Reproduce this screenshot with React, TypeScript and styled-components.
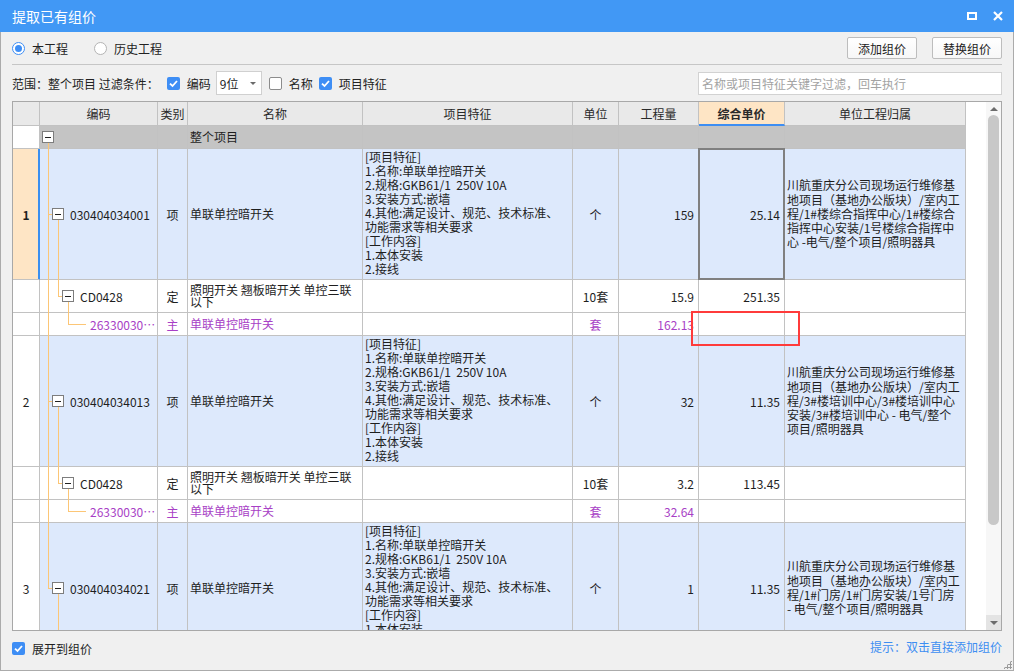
import React from 'react';
import styled, { createGlobalStyle, css } from 'styled-components';

const GlobalStyle = createGlobalStyle`
  html, body { margin: 0; padding: 0; background: #ffffff; }
  body {
    font-family: "Noto Sans CJK SC", "Microsoft YaHei", sans-serif;
    font-size: 12px;
    color: #1e1e1e;
  }
  * { box-sizing: border-box; }
`;

const BLUE = '#4198f5';
const LINE = '#c2c2c2';
const TREE = '#fcc676';
const PURPLE = '#a83fc6';
const ROW_BLUE = '#dde9fc';
const PEACH = '#fee5c5';
const COLS = '27px 118px 30px 175px 210px 46px 80px 86px 181px';

const Window = styled.div`
  position: relative;
  width: 1014px;
  height: 671px;
  display: flex;
  flex-direction: column;
  background: #f0f0f0;
`;

const TitleBar = styled.div`
  height: 32px;
  flex-shrink: 0;
  background: ${BLUE};
  color: #fff;
  display: flex;
  align-items: center;
  padding: 0 11px 0 12px;
  font-size: 14px;
`;

const Title = styled.span`
  flex: 1;
`;

const TitleButtons = styled.div`
  display: flex;
  align-items: center;
  gap: 16px;
`;

const MaxIcon = styled.span`
  width: 10px;
  height: 8px;
  border: 2px solid #fff;
`;

const Body = styled.div`
  flex: 1;
  display: flex;
  flex-direction: column;
  padding: 0 11px;
  border: 1px solid #ababab;
  border-top: none;
`;

const TopRow = styled.div`
  height: 33px;
  flex-shrink: 0;
  display: flex;
  align-items: center;
  border-bottom: 1px solid #c6c6c6;
`;

const RadioGroup = styled.div`
  display: flex;
  align-items: center;
  flex: 1;
`;

const RadioLabel = styled.label`
  display: flex;
  align-items: center;
  gap: 7px;
  margin-right: 26px;
  font-size: 12px;
  color: #222;
`;

const RadioDot = styled.span<{ $on?: boolean }>`
  width: 13px;
  height: 13px;
  border-radius: 50%;
  background: #fff;
  border: 1px solid ${p => (p.$on ? '#3e8ef5' : '#b4b4b4')};
  display: flex;
  align-items: center;
  justify-content: center;
  &::after {
    content: '';
    width: 7px;
    height: 7px;
    border-radius: 50%;
    background: ${p => (p.$on ? '#3e8ef5' : 'transparent')};
  }
`;

const Buttons = styled.div`
  display: flex;
  gap: 15px;
`;

const Button = styled.button`
  width: 70px;
  height: 22px;
  padding: 0;
  border: 1px solid #bdbdbd;
  border-radius: 2px;
  background: linear-gradient(#ffffff, #f7f7f7);
  font-family: inherit;
  font-size: 12px;
  color: #222;
`;

const FilterRow = styled.div`
  height: 36px;
  flex-shrink: 0;
  display: flex;
  align-items: center;
  font-size: 12px;
  color: #222;
`;

const FilterItem = styled.label<{ $gap?: number }>`
  display: flex;
  align-items: center;
  gap: 7px;
  margin-left: ${p => p.$gap ?? 0}px;
`;

const Box = styled.span<{ $on?: boolean }>`
  width: 13px;
  height: 13px;
  border-radius: 2px;
  display: flex;
  align-items: center;
  justify-content: center;
  ${p =>
    p.$on
      ? css`
          background: #3e8ef5;
        `
      : css`
          background: #fff;
          border: 1px solid #8c8c8c;
        `}
`;

const Select = styled.div`
  width: 46px;
  height: 24px;
  margin-left: 5px;
  background: #fff;
  border: 1px solid #d0d0d0;
  display: flex;
  align-items: center;
  justify-content: space-between;
  padding: 0 5px 0 3px;
  &::after {
    content: '';
    border-left: 3px solid transparent;
    border-right: 3px solid transparent;
    border-top: 3px solid #6a6a6a;
  }
`;

const Search = styled.input`
  margin-left: auto;
  width: 304px;
  height: 23px;
  border: 1px solid #d2d2d2;
  background: #fff;
  padding: 0 3px;
  font-family: inherit;
  font-size: 12px;
  outline: none;
  &::placeholder {
    color: #a3a3a3;
  }
`;

const TableFrame = styled.div`
  height: 530px;
  flex-shrink: 0;
  border: 1px solid #a8a8a8;
  display: flex;
  background: #fff;
`;

const GridArea = styled.div`
  flex: 1;
  overflow: hidden;
  background: #fff;
  display: flex;
  flex-direction: column;
`;

const HeaderRow = styled.div`
  display: grid;
  grid-template-columns: ${COLS};
  width: 953px;
  height: 24px;
  flex-shrink: 0;
`;

const HeaderCell = styled.div<{ $active?: boolean }>`
  background: ${p => (p.$active ? PEACH : '#e9e9e9')};
  border-right: 1px solid ${LINE};
  border-bottom: ${p => (p.$active ? '2px solid #3e8ef2' : `1px solid ${LINE}`)};
  display: flex;
  align-items: center;
  justify-content: center;
  color: #2a2a2a;
  font-weight: ${p => (p.$active ? 700 : 400)};
`;

const Row = styled.div<{ $h: number; $color: string }>`
  display: grid;
  grid-template-columns: ${COLS};
  width: 953px;
  height: ${p => p.$h}px;
  flex-shrink: 0;
  color: ${p => p.$color};
`;

const Cell = styled.div<{ $bg: string }>`
  position: relative;
  min-width: 0;
  background: ${p => p.$bg};
  border-right: 1px solid ${LINE};
  border-bottom: 1px solid ${LINE};
  display: flex;
  align-items: center;
`;

const NumCell = styled(Cell)<{ $active?: boolean }>`
  justify-content: center;
  color: #1e1e1e;
  ${p =>
    p.$active &&
    css`
      font-weight: 700;
      border-right-color: #3a8ff0;
      box-shadow: inset -1px 0 0 #3a8ff0;
    `}
`;

const CenterCell = styled(Cell)`
  justify-content: center;
`;

const TextCell = styled(Cell)`
  padding: 0 2px;
  white-space: pre;
  line-height: 12px;
`;

const FeatureCell = styled(Cell)`
  align-items: flex-start;
  padding: 1px 2px;
  white-space: pre;
  line-height: 14px;
  overflow: hidden;
`;

const OwnerCell = styled(Cell)`
  padding: 0 2px;
  white-space: pre;
  line-height: 14.3px;
`;

const ValueCell = styled(Cell)<{ $selected?: boolean }>`
  justify-content: flex-end;
  padding-right: 4px;
  ${p =>
    p.$selected &&
    css`
      &::after {
        content: '';
        position: absolute;
        top: -1px;
        left: -1px;
        right: -1px;
        bottom: -1px;
        border: 2px solid #808080;
        z-index: 2;
      }
    `}
`;

const TreeCell = styled(Cell)<{ $indent: number }>`
  padding-left: ${p => p.$indent}px;
`;

const CodeText = styled.span`
  white-space: nowrap;
  overflow: hidden;
  min-width: 0;
`;

const MinusBox = styled.span`
  position: relative;
  z-index: 1;
  width: 12px;
  height: 12px;
  flex-shrink: 0;
  background: #fff;
  border: 1px solid #7d7d7d;
  margin-right: 6px;
  &::after {
    content: '';
    position: absolute;
    left: 2px;
    right: 2px;
    top: 50%;
    height: 1px;
    margin-top: -0.5px;
    background: #222;
  }
`;

const VLine = styled.span<{ $x: number; $from: 'start' | 'box'; $to: 'end' | 'mid' }>`
  position: absolute;
  left: ${p => p.$x}px;
  width: 1px;
  background: ${TREE};
  top: ${p => (p.$from === 'start' ? '0' : 'calc(50% + 6px)')};
  bottom: ${p => (p.$to === 'end' ? '-1px' : '50%')};
`;

const HLine = styled.span<{ $x: number; $w: number }>`
  position: absolute;
  top: 50%;
  left: ${p => p.$x}px;
  width: ${p => p.$w}px;
  height: 1px;
  background: ${TREE};
`;

const Scrollbar = styled.div`
  width: 15px;
  flex-shrink: 0;
  background: #f7f7f7;
  display: flex;
  flex-direction: column;
  align-items: center;
`;

const Arrow = styled.div<{ $down?: boolean }>`
  width: 15px;
  height: ${p => (p.$down ? 15 : 13)}px;
  display: flex;
  align-items: center;
  justify-content: center;
  background: ${p => (p.$down ? '#e4e4e4' : 'transparent')};
  &::after {
    content: '';
    border-left: 4px solid transparent;
    border-right: 4px solid transparent;
    ${p =>
      p.$down
        ? css`
            border-top: 4px solid #6c6c6c;
          `
        : css`
            border-bottom: 4px solid #6c6c6c;
          `}
  }
`;

const Thumb = styled.div`
  width: 11px;
  height: 410px;
  border-radius: 6px;
  background: #c8c8c8;
`;

const Spacer = styled.div`
  flex: 1;
`;

const BottomBar = styled.div`
  flex: 1;
  display: flex;
  align-items: flex-start;
  justify-content: space-between;
  padding-top: 9px;
  font-size: 12px;
`;

const Hint = styled.span`
  color: #3d8ef2;
  line-height: 14px;
`;

const Grip = styled.div`
  position: absolute;
  right: 2px;
  bottom: 2px;
  width: 9px;
  height: 9px;
  background-image: radial-gradient(circle, #9a9a9a 1px, transparent 1.2px);
  background-size: 3px 3px;
  clip-path: polygon(100% 0, 100% 100%, 0 100%);
`;

const Annotation = styled.div`
  position: absolute;
  left: 691px;
  top: 311px;
  width: 109px;
  height: 35px;
  border: 2px solid #ff3b3b;
  z-index: 5;
`;

const Check = () => (
  <svg width="11" height="11" viewBox="0 0 11 11">
    <path d="M2 5.6 L4.5 8 L9 3" fill="none" stroke="#fff" strokeWidth="1.8" />
  </svg>
);

const CloseIcon = () => (
  <svg width="10" height="10" viewBox="0 0 10 10">
    <path d="M1 1 L9 9 M9 1 L1 9" stroke="#fff" strokeWidth="2.2" />
  </svg>
);

type Kind = 'group' | 'main' | 'def' | 'sub';

interface Item {
  kind: Kind;
  no?: string;
  code?: string;
  cat?: string;
  name?: string;
  unit?: string;
  qty?: string;
  price?: string;
  owner?: string;
  active?: boolean;
  last?: boolean;
}

const HEIGHTS: Record<Kind, number> = { group: 23, main: 131, def: 33, sub: 23 };
const INDENT: Record<Kind, number> = { group: 2, main: 12, def: 22, sub: 50 };

const FEATURES = `[项目特征]
1.名称:单联单控暗开关
2.规格:GKB61/1  250V 10A
3.安装方式:嵌墙
4.其他:满足设计、规范、技术标准、
功能需求等相关要求
[工作内容]
1.本体安装
2.接线`;

const DEF_NAME = `照明开关 翘板暗开关 单控三联
以下`;

const items: Item[] = [
  { kind: 'group', name: '整个项目' },
  {
    kind: 'main', no: '1', code: '030404034001', cat: '项', name: '单联单控暗开关', unit: '个',
    qty: '159', price: '25.14', active: true,
    owner: `川航重庆分公司现场运行维修基
地项目（基地办公版块）/室内工
程/1#楼综合指挥中心/1#楼综合
指挥中心安装/1号楼综合指挥中
心 -电气/整个项目/照明器具`,
  },
  { kind: 'def', code: 'CD0428', cat: '定', name: DEF_NAME, unit: '10套', qty: '15.9', price: '251.35' },
  { kind: 'sub', code: '26330030⋯', cat: '主', name: '单联单控暗开关', unit: '套', qty: '162.13', price: '' },
  {
    kind: 'main', no: '2', code: '030404034013', cat: '项', name: '单联单控暗开关', unit: '个',
    qty: '32', price: '11.35',
    owner: `川航重庆分公司现场运行维修基
地项目（基地办公版块）/室内工
程/3#楼培训中心/3#楼培训中心
安装/3#楼培训中心 - 电气/整个
项目/照明器具`,
  },
  { kind: 'def', code: 'CD0428', cat: '定', name: DEF_NAME, unit: '10套', qty: '3.2', price: '113.45' },
  { kind: 'sub', code: '26330030⋯', cat: '主', name: '单联单控暗开关', unit: '套', qty: '32.64', price: '' },
  {
    kind: 'main', no: '3', code: '030404034021', cat: '项', name: '单联单控暗开关', unit: '个',
    qty: '1', price: '11.35', last: true,
    owner: `川航重庆分公司现场运行维修基
地项目（基地办公版块）/室内工
程/1#门房/1#门房安装/1号门房
- 电气/整个项目/照明器具`,
  },
];

const HEADERS = ['', '编码', '类别', '名称', '项目特征', '单位', '工程量', '综合单价', '单位工程归属'];

const TreeLines = ({ item }: { item: Item }) => {
  switch (item.kind) {
    case 'group':
      return <VLine $x={8} $from="box" $to="end" />;
    case 'main':
      return (
        <>
          <VLine $x={8} $from="start" $to={item.last ? 'mid' : 'end'} />
          <HLine $x={8} $w={4} />
          <VLine $x={18} $from="box" $to="end" />
        </>
      );
    case 'def':
      return (
        <>
          <VLine $x={8} $from="start" $to="end" />
          <VLine $x={18} $from="start" $to="mid" />
          <HLine $x={18} $w={4} />
          <VLine $x={28} $from="box" $to="end" />
        </>
      );
    default:
      return (
        <>
          <VLine $x={8} $from="start" $to="end" />
          <VLine $x={28} $from="start" $to="mid" />
          <HLine $x={28} $w={18} />
        </>
      );
  }
};

const GridRow = ({ item }: { item: Item }) => {
  const bg = item.kind === 'group' ? '#c4c4c4' : item.kind === 'main' ? ROW_BLUE : '#ffffff';
  const numBg = item.active ? PEACH : '#ffffff';
  return (
    <Row $h={HEIGHTS[item.kind]} $color={item.kind === 'sub' ? PURPLE : '#1e1e1e'}>
      <NumCell $bg={numBg} $active={item.active}>{item.no}</NumCell>
      <TreeCell $bg={bg} $indent={INDENT[item.kind]}>
        <TreeLines item={item} />
        {item.kind !== 'sub' && <MinusBox />}
        {item.code && <CodeText>{item.code}</CodeText>}
      </TreeCell>
      <CenterCell $bg={bg}>{item.cat}</CenterCell>
      <TextCell $bg={bg}>{item.name}</TextCell>
      {item.kind === 'main' ? <FeatureCell $bg={bg}>{FEATURES}</FeatureCell> : <Cell $bg={bg} />}
      <CenterCell $bg={bg}>{item.unit}</CenterCell>
      <ValueCell $bg={bg}>{item.qty}</ValueCell>
      <ValueCell $bg={bg} $selected={item.active}>{item.price}</ValueCell>
      <OwnerCell $bg={bg}>{item.owner}</OwnerCell>
    </Row>
  );
};

export default function App() {
  return (
    <>
      <GlobalStyle />
      <Window>
        <TitleBar>
          <Title>提取已有组价</Title>
          <TitleButtons>
            <MaxIcon />
            <CloseIcon />
          </TitleButtons>
        </TitleBar>
        <Body>
          <TopRow>
            <RadioGroup>
              <RadioLabel>
                <RadioDot $on />
                本工程
              </RadioLabel>
              <RadioLabel>
                <RadioDot />
                历史工程
              </RadioLabel>
            </RadioGroup>
            <Buttons>
              <Button>添加组价</Button>
              <Button>替换组价</Button>
            </Buttons>
          </TopRow>
          <FilterRow>
            <span>范围：整个项目 过滤条件：</span>
            <FilterItem $gap={8}>
              <Box $on><Check /></Box>
              编码
            </FilterItem>
            <Select>9位</Select>
            <FilterItem $gap={7}>
              <Box />
              名称
            </FilterItem>
            <FilterItem $gap={6}>
              <Box $on><Check /></Box>
              项目特征
            </FilterItem>
            <Search placeholder="名称或项目特征关键字过滤，回车执行" />
          </FilterRow>
          <TableFrame>
            <GridArea>
              <HeaderRow>
                {HEADERS.map((h, i) => (
                  <HeaderCell key={i} $active={h === '综合单价'}>{h}</HeaderCell>
                ))}
              </HeaderRow>
              {items.map((item, i) => (
                <GridRow key={i} item={item} />
              ))}
            </GridArea>
            <Scrollbar>
              <Arrow />
              <Thumb />
              <Spacer />
              <Arrow $down />
            </Scrollbar>
          </TableFrame>
          <BottomBar>
            <FilterItem>
              <Box $on><Check /></Box>
              展开到组价
            </FilterItem>
            <Hint>提示：双击直接添加组价</Hint>
          </BottomBar>
        </Body>
        <Grip />
        <Annotation />
      </Window>
    </>
  );
}
